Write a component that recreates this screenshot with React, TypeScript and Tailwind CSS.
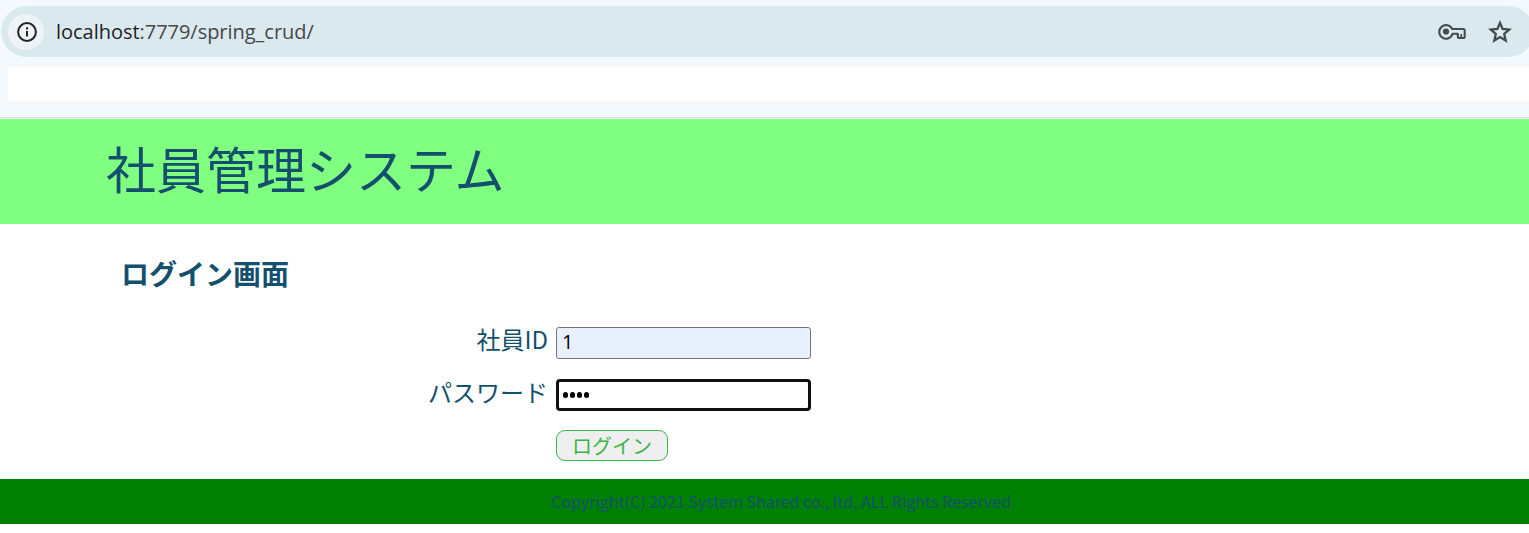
import React from "react";

function InfoIcon() {
  return (
    <svg width="20" height="20" viewBox="0 0 20 20" fill="none" stroke="#1f2426">
      <circle cx="10" cy="10" r="8.9" strokeWidth="2" />
      <path d="M10 9v5.4M10 5.2v2.2" strokeWidth="2" />
    </svg>
  );
}

function KeyIcon() {
  return (
    <svg width="28" height="18" viewBox="0 0 28 18" fill="none" stroke="#454b4e" strokeWidth="2.1">
      <path d="M14.2 6H25.2a1.5 1.5 0 0 1 1.5 1.5v6a1.5 1.5 0 0 1-1.5 1.5h-4.4a1 1 0 0 1-1-1v-3.2h-5.2A6.8 6.8 0 1 1 14.2 6Z" strokeLinejoin="round" />
      <path d="M23.2 11v4" strokeWidth="1.7" />
      <circle cx="8" cy="8.5" r="3.1" fill="#454b4e" stroke="none" />
    </svg>
  );
}

function StarIcon() {
  return (
    <svg width="24" height="23" viewBox="0 0 24 23" fill="none" stroke="#454b4e" strokeWidth="2.3">
      <path d="M12 2.9l2.6 6.1 6.7.6-5.1 4.4 1.5 6.5-5.7-3.5-5.7 3.5 1.5-6.5-5.1-4.4 6.7-.6Z" />
    </svg>
  );
}

function AddressBar() {
  return (
    <div className="h-[119px] overflow-hidden bg-[#f4f9fd] pt-[6px]">
      <div className="ml-px flex h-[51px] w-[1533px] items-center rounded-full bg-[#dae9ee] pl-[7px]">
        <div className="flex size-9 shrink-0 items-center justify-center rounded-full bg-[#eef3f8] pl-px">
          <InfoIcon />
        </div>
        <div className="ml-[12px] whitespace-nowrap font-['Open_Sans','Noto_Sans',sans-serif] text-[20px] leading-[28px] tracking-[-0.03px] text-[#474747]">
          <span className="text-[#1f1f1f]">localhost</span>:7779/spring_crud/
        </div>
        <div className="ml-auto mr-[22px] flex items-center gap-[22px]">
          <KeyIcon />
          <StarIcon />
        </div>
      </div>
      <div className="ml-2 mt-[9px] h-9 bg-white" />
      <div className="mt-[15px] h-px bg-[#d7e3ea]" />
      <div className="h-px bg-white" />
    </div>
  );
}

function LoginForm() {
  return (
    <form className="mt-[33px] grid grid-cols-[548px_255px] gap-x-2" onSubmit={(e) => e.preventDefault()}>
      <label htmlFor="employee" className="h-[52px] text-right text-[24px] leading-[26px]">社員ID</label>
      <input
        id="employee"
        defaultValue="1"
        className="mt-[1px] h-8 w-full rounded-[3px] border border-[#767676] bg-[#e8f0fe] px-[5px] pb-[3px] font-['Open_Sans',sans-serif] text-[20px] text-black outline-none"
      />
      <span className="h-[52px] text-right text-[24px] leading-[28px]">パスワード</span>
      <div className="mt-px flex h-8 items-center gap-[1.5px] rounded-[4px] border-[3px] border-[#101010] bg-white pl-[3.5px]">
        {[0, 1, 2, 3].map((n) => (
          <span key={n} className="size-[5.5px] rounded-full bg-black" />
        ))}
      </div>
      <button className="col-start-2 h-[31px] w-28 rounded-[9px] border border-[#39b54a] bg-[#efefef] text-[20px] leading-[29px] text-[#39b54a]">
        ログイン
      </button>
    </form>
  );
}

export default function App() {
  return (
    <div className="h-[533px] overflow-hidden bg-white font-['Noto_Sans_CJK_JP',sans-serif] text-[#14506e]">
      <AddressBar />
      <header className="h-[105px] bg-[#80ff80] pl-[106px] pt-[11px]">
        <h1 className="text-[50px] font-normal leading-[74px]">社員管理システム</h1>
      </header>
      <main className="h-[255px] pt-[29px]">
        <h2 className="pl-[121px] text-[28px] font-bold leading-[40px]">ログイン画面</h2>
        <LoginForm />
      </main>
      <footer className="h-[45px] bg-[#008000] pl-[33px] text-center text-[16px] leading-[44px]">
        Copyright(C) 2021 System Shared co., ltd, ALL Rights Reserved
      </footer>
    </div>
  );
}
